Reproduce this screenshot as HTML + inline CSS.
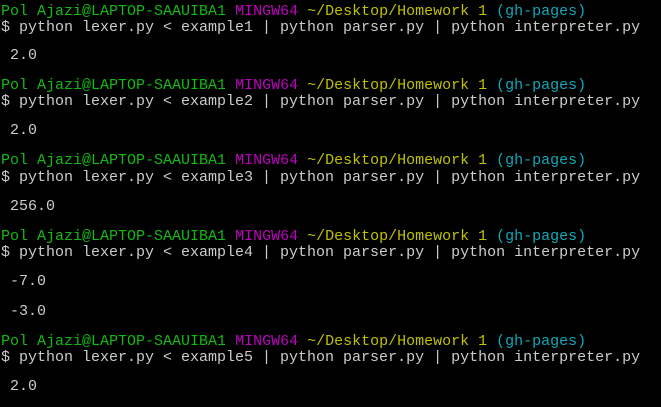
<!DOCTYPE html>
<html><head><meta charset="utf-8"><style>
html,body{margin:0;padding:0;background:#000;width:661px;height:407px;overflow:hidden}
.l{position:absolute;left:1px;font-family:"Liberation Mono",monospace;font-size:15px;line-height:18px;height:18px;white-space:pre;color:#cccccc}
.g{color:#13b913}.m{color:#c000c0}.y{color:#c0c000}.c{color:#11a8b8}
</style></head><body>
<div class="l" style="top:3px"><span class="g">Pol Ajazi@LAPTOP-SAAUIBA1</span> <span class="m">MINGW64</span> <span class="y">~/Desktop/Homework 1</span> <span class="c">(gh-pages)</span></div>
<div class="l" style="top:19px">$ python lexer.py &lt; example1 | python parser.py | python interpreter.py</div>
<div class="l" style="top:47px"> 2.0</div>
<div class="l" style="top:77px"><span class="g">Pol Ajazi@LAPTOP-SAAUIBA1</span> <span class="m">MINGW64</span> <span class="y">~/Desktop/Homework 1</span> <span class="c">(gh-pages)</span></div>
<div class="l" style="top:93px">$ python lexer.py &lt; example2 | python parser.py | python interpreter.py</div>
<div class="l" style="top:122px"> 2.0</div>
<div class="l" style="top:152px"><span class="g">Pol Ajazi@LAPTOP-SAAUIBA1</span> <span class="m">MINGW64</span> <span class="y">~/Desktop/Homework 1</span> <span class="c">(gh-pages)</span></div>
<div class="l" style="top:169px">$ python lexer.py &lt; example3 | python parser.py | python interpreter.py</div>
<div class="l" style="top:198px"> 256.0</div>
<div class="l" style="top:228px"><span class="g">Pol Ajazi@LAPTOP-SAAUIBA1</span> <span class="m">MINGW64</span> <span class="y">~/Desktop/Homework 1</span> <span class="c">(gh-pages)</span></div>
<div class="l" style="top:244px">$ python lexer.py &lt; example4 | python parser.py | python interpreter.py</div>
<div class="l" style="top:273px"> -7.0</div>
<div class="l" style="top:303px"> -3.0</div>
<div class="l" style="top:333px"><span class="g">Pol Ajazi@LAPTOP-SAAUIBA1</span> <span class="m">MINGW64</span> <span class="y">~/Desktop/Homework 1</span> <span class="c">(gh-pages)</span></div>
<div class="l" style="top:349px">$ python lexer.py &lt; example5 | python parser.py | python interpreter.py</div>
<div class="l" style="top:378px"> 2.0</div>
</body></html>
